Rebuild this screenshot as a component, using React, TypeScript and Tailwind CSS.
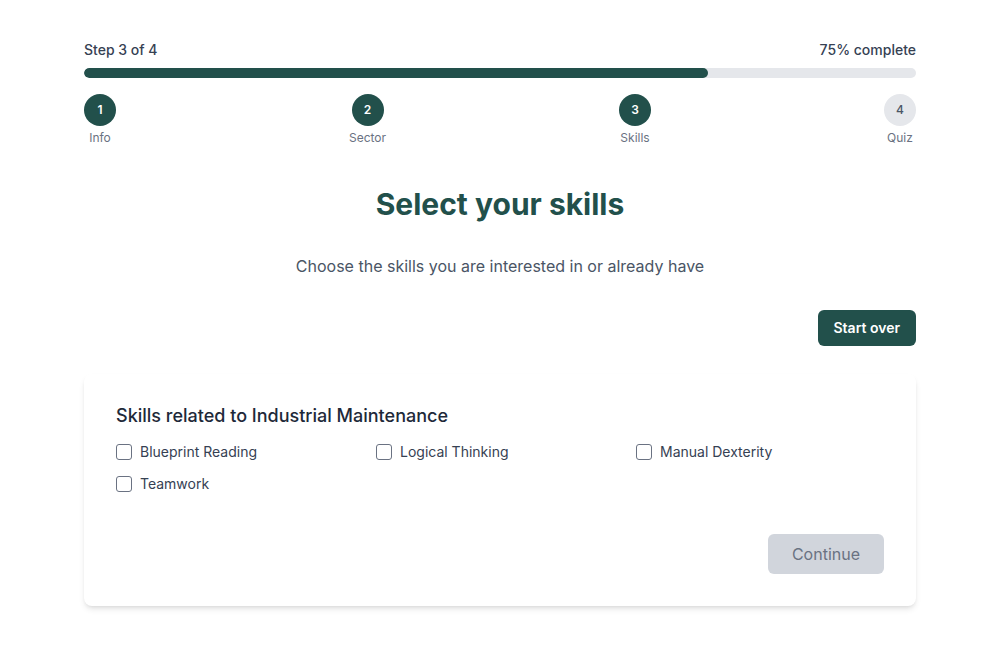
const steps = [
  { n: 1, label: "Info", done: true },
  { n: 2, label: "Sector", done: true },
  { n: 3, label: "Skills", done: true },
  { n: 4, label: "Quiz", done: false },
]

const skills = ["Blueprint Reading", "Logical Thinking", "Manual Dexterity", "Teamwork"]

export default function App() {
  return (
    <div className="min-h-screen bg-white pl-2 font-['Inter',sans-serif]">
      <div className="max-w-[832px] mx-auto pt-10">
        <div className="flex justify-between text-sm font-medium text-gray-700 mb-2">
          <span>Step 3 of 4</span>
          <span>75% complete</span>
        </div>
        <div className="h-2.5 w-full bg-gray-200 rounded-full overflow-hidden">
          <div className="h-full w-3/4 bg-[#22504b] rounded-full" />
        </div>

        <div className="flex justify-between mt-4">
          {steps.map((s) => (
            <div key={s.n} className="flex flex-col items-center">
              <div
                className={
                  s.done
                    ? "w-8 h-8 rounded-full flex items-center justify-center text-xs font-semibold bg-[#22504b] text-white"
                    : "w-8 h-8 rounded-full flex items-center justify-center text-xs font-medium bg-gray-200 text-gray-600"
                }
              >
                {s.n}
              </div>
              <span className="mt-1 text-xs text-gray-500">{s.label}</span>
            </div>
          ))}
        </div>

        <h1 className="mt-10 text-3xl font-bold text-center text-[#22504b]">Select your skills</h1>
        <p className="mt-8 text-base text-center text-gray-600">
          Choose the skills you are interested in or already have
        </p>

        <div className="flex justify-end mt-8 mb-7">
          <button className="px-4 py-2 rounded-md bg-[#22504b] text-white text-sm font-semibold">
            Start over
          </button>
        </div>

        <div className="bg-white rounded-lg shadow-md px-8 pt-7 pb-8">
          <h2 className="text-lg font-medium text-gray-800 mb-3">
            Skills related to Industrial Maintenance
          </h2>
          <div className="grid grid-cols-3 gap-3">
            {skills.map((s) => (
              <label key={s} className="flex items-center gap-2 text-sm text-gray-700">
                <span className="w-4 h-4 rounded-[3px] border border-gray-500 bg-white" />
                {s}
              </label>
            ))}
          </div>
          <div className="flex justify-end mt-10">
            <button className="px-6 py-2 rounded-md bg-gray-300 text-gray-500 text-base">
              Continue
            </button>
          </div>
        </div>
      </div>
    </div>
  )
}
